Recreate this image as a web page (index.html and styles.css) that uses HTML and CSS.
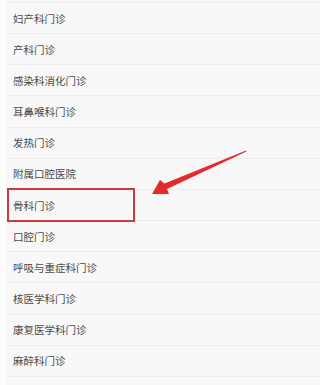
FILE: index.html
```html
<!DOCTYPE html>
<html lang="zh">
<head>
<meta charset="utf-8">
<meta name="viewport" content="width=device-width, initial-scale=1">
<link rel="stylesheet" href="styles.css">
</head>
<body>
<div class="page">
  <ul class="list">
    <li class="item">妇产科门诊</li>
    <li class="item">产科门诊</li>
    <li class="item">感染科消化门诊</li>
    <li class="item">耳鼻喉科门诊</li>
    <li class="item">发热门诊</li>
    <li class="item">附属口腔医院</li>
    <li class="item">骨科门诊</li>
    <li class="item">口腔门诊</li>
    <li class="item">呼吸与重症科门诊</li>
    <li class="item">核医学科门诊</li>
    <li class="item">康复医学科门诊</li>
    <li class="item">麻醉科门诊</li>
    <li class="item"></li>
  </ul>
  <div class="highlight"></div>
  <svg class="arrow" width="299" height="385" viewBox="0 0 299 385">
    <polygon points="152,194 160,180 164.5,183.5 246,150.5 246.4,151.5 167,189 169,194" fill="#e52a2e"/>
  </svg>
</div>
</body>
</html>
```
FILE: styles.css
```css
html, body {
  margin: 0;
  padding: 0;
  background: #fdfdfd;
}
.page {
  position: relative;
  width: 100%;
  height: 385px;
  overflow: hidden;
  font-family: "Noto Sans CJK SC", "Noto Sans", sans-serif;
}
.list {
  list-style: none;
  margin: 0 0 0 6px;
  padding: 2px 0 0 0;
  background: #f8f8f8;
}
.item {
  height: 30.17px;
  border-top: 1px solid #ebebeb;
  padding-left: 7px;
  display: flex;
  align-items: center;
  font-size: 10.5px;
  color: #4a4a4a;
  box-sizing: content-box;
}
.highlight {
  position: absolute;
  left: 7px;
  top: 188px;
  width: 124px;
  height: 30px;
  border: 2px solid #cc3a3f;
}
.arrow {
  position: absolute;
  left: 0;
  top: 0;
}
```
